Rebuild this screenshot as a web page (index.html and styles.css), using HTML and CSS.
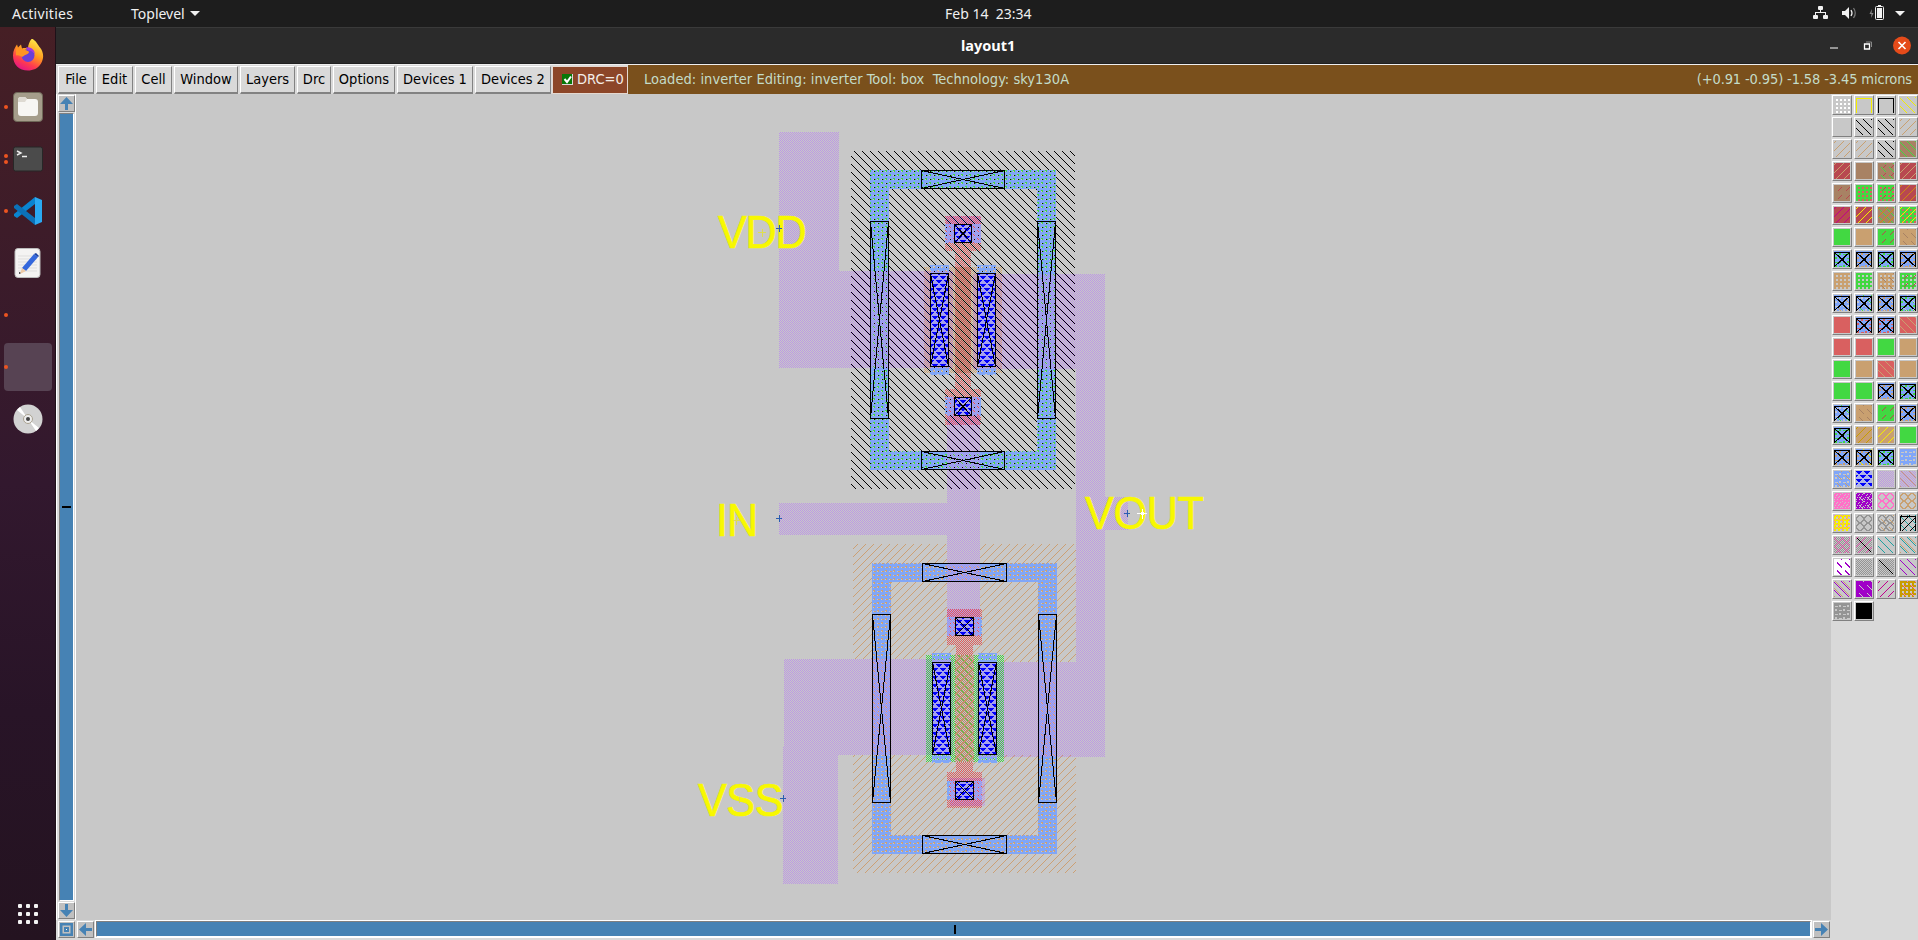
FILE: index.html
```
<!DOCTYPE html>
<html lang="en">
<head>
<meta charset="utf-8">
<title>layout1</title>
<link rel="stylesheet" href="styles.css">
</head>
<body>
<header class="topbar">
  <span class="activities">Activities</span>
  <span class="appmenu">Toplevel <i class="caret"></i></span>
  <span class="clock">Feb 14&nbsp; 23:34</span>
  <svg class="tray" width="110" height="27" viewBox="1808 0 110 27">
    <g fill="#f2f2f2">
      <rect x="1818" y="6" width="5" height="4" rx="1"/><rect x="1813" y="15" width="5" height="4" rx="1"/><rect x="1823" y="15" width="5" height="4" rx="1"/>
      <path d="M1820 10h1v2h5v3h-1v-2h-9v2h-1v-3h5z"/>
      <path d="M1842 11h3l4-4v12l-4-4h-3z"/>
      <path d="M1895 11h10l-5 5z"/>
      <rect x="1877" y="8" width="5" height="10"/><rect x="1878" y="5" width="3" height="1.500"/>
    </g>
    <rect x="1875.500" y="6.500" width="8" height="13" rx="1" fill="none" stroke="#f2f2f2"/>
    <path d="M1851 10q2 3 0 6" fill="none" stroke="#eee" stroke-width="1.300"/>
    <path d="M1853.500 8q3.500 5 0 10" fill="none" stroke="#777" stroke-width="1.300"/>
    <path d="M1872 9l-2.500 5h2l-.5 4 2.500-5h-2z" fill="#8a8a8a"/>
  </svg>
</header>
<div class="desktop">
  <nav class="dock">
    <div class="slot"><svg width="32" height="32" viewBox="0 0.500 32 32">
      <defs><linearGradient id="fox" x1=".8" y1="0" x2=".3" y2="1"><stop offset="0" stop-color="#fff44f"/><stop offset=".45" stop-color="#ff9a1f"/><stop offset=".75" stop-color="#ff3b4f"/><stop offset="1" stop-color="#e31587"/></linearGradient></defs>
      <path d="M20 0c5 3 6 7 8 9 4 5 4 11 1 16-3 5-8 7-13 7C7 32 1 26 1 17c0-5 2-8 4-11l1 3 3-3 1 4c3-1 5 0 6 0 0-4 2-8 4-10z" fill="url(#fox)"/>
      <circle cx="16" cy="17" r="6.500" fill="#6a3fd8"/><path d="M14 9c6-1 9 3 9 8 0-3-4-5-7-5z" fill="#a238e0"/>
      <path d="M4 10c3-1 5 0 7 1 3 1 6 1 6 3-1 2-4 2-6 4-2 1-3-2-7-1z" fill="#ff9422"/></svg></div>
    <div class="slot"><i class="dot"></i><svg width="30" height="30" viewBox="0 0 30 30"><rect x=".5" y=".5" width="29" height="29" rx="3.500" fill="#a59d8b" stroke="#6f6858"/><path d="M5 8q0-3 3-3h4l2 2h8q3 0 3 3v11q0 3-3 3H8q-3 0-3-3z" fill="#f7f6f3"/><path d="M5 10V8q0-3 3-3h4l2 2-2 3z" fill="#dedad2"/></svg></div>
    <div class="slot"><i class="dot up"></i><i class="dot down"></i><svg width="30" height="26" viewBox="0 0 30 26"><rect x=".5" y="1" width="29" height="24" rx="2" fill="#4b4b4b" stroke="#272727"/><path d="M4 5l4 2-4 2M9 10.500h5" fill="none" stroke="#eee" stroke-width="1.400"/></svg></div>
    <div class="slot"><i class="dot"></i><svg width="30" height="30" viewBox="0 0 30 30"><path d="M22 1l7 3v22l-7 3z" fill="#2aa9f2"/><path d="M22 1v7L4 22l-3-2v-2z" fill="#0a84d0"/><path d="M22 29v-7L4 8l-3 2v2z" fill="#0b71b8"/></svg></div>
    <div class="slot"><svg width="27" height="30" viewBox="0 0 27 30"><rect x="1" y=".5" width="25" height="29" rx="3" fill="#f4f3f2" stroke="#bbb"/><path d="M4 8h19M4 11h19M4 14h19M4 17h19M4 20h19M4 23h19" stroke="#d5d5d5" stroke-width=".7"/><path d="M8 20L20 6l4 3-12 14z" fill="#3568dc"/><path d="M20 6l2-1 3 3-1 1z" fill="#173e9e"/><path d="M8 20l4 3-6 3z" fill="#edc9a5"/><path d="M5 24l2 1-2 1z" fill="#222"/></svg></div>
    <div class="slot"><i class="dot"></i></div>
    <div class="slot active"><i class="dot"></i></div>
    <div class="slot"><svg width="30" height="30" viewBox="0 0 30 30"><circle cx="15" cy="15" r="14.500" fill="#d2d2d2"/><path d="M15 15L4 6a14 14 0 0 1 3-3zM15 15l11 9a14 14 0 0 1-3 3z" fill="#fff"/><circle cx="15" cy="15" r="4.500" fill="#eee" stroke="#aaa291"/><circle cx="15" cy="15" r="2" fill="#444"/></svg></div>
    <div class="apps"><i></i><i></i><i></i><i></i><i></i><i></i><i></i><i></i><i></i></div>
  </nav>
  <main class="window">
    <div class="titlebar"><span class="title">layout1</span>
      <svg class="controls" width="100" height="36" viewBox="1818 27.500 100 36"><path d="M1830 47.500h8" stroke="#fff"/><path d="M1864.500 43.500h5v5h-5z" stroke="#fff" stroke-width="1.300" fill="none"/><path d="M1866 41.500h5.500v5" stroke="#888" fill="none"/><circle cx="1902" cy="45" r="9" fill="#e54b1a"/><path d="M1898.500 41.500l7 7m0-7l-7 7" stroke="#fff" stroke-width="1.600"/></svg>
    </div>
    <div class="menubar">
      <span class="btn w38">File</span><span class="btn w39">Edit</span><span class="btn w39">Cell</span><span class="btn w66">Window</span><span class="btn w57">Layers</span><span class="btn w36">Drc</span><span class="btn w64">Options</span><span class="btn w78">Devices 1</span><span class="btn w78">Devices 2</span>
      <span class="drc"><svg width="11" height="11" viewBox="0 0 11 11"><path d="M0 0h11v11H0z" fill="#d9d9d9"/><path d="M0 0h10v10H0z" fill="#087808"/><path d="M2.500 5l2.500 3 4-5.500" fill="none" stroke="#fff" stroke-width="2"/></svg><span>DRC=0</span></span>
      <div class="status"><span class="msg">Loaded: inverter Editing: inverter Tool: box&nbsp; Technology: sky130A</span><span class="pos">(+0.91 -0.95) -1.58 -3.45 microns</span></div>
    </div>
    <div class="work">
      <div class="vscroll">
        <svg class="sbtn" viewBox="0 0 15 15"><path d="M7.500 1L14 8H9v6H6V8H1z"/></svg>
        <div class="trough"><i class="htick"></i></div>
        <svg class="sbtn" viewBox="0 0 15 15"><path d="M7.500 14L14 7H9V1H6v6H1z"/></svg>
      </div>
      <svg class="layout" width="1755" height="826" viewBox="76 94 1755 826" shape-rendering="crispEdges">
        <defs id="stipples"></defs>
        <g id="cells"></g>
        <g class="labels">
          <text transform="translate(718 248) scale(.94 1)" textLength="94.500">VDD</text>
          <text transform="translate(716 536) scale(.94 1)" textLength="45">IN</text>
          <text transform="translate(1085 529) scale(.94 1)" textLength="126.500">VOUT</text>
          <text transform="translate(698 815.500) scale(.94 1)" textLength="91">VSS</text>
        </g>
        <g fill="none" stroke="#2a5db0"><path d="M776 228.500h6M779.500 225v7M776 518.500h6M779.500 515v7M1124 513.500h6M1127.500 510v7M780 798.500h6M783.500 795v7"/></g>
        <path d="M758 232.500h8M762.500 229v8M733 520.500h7M736.500 517v8M739.500 797v6" stroke="#dede50"/>
        <path d="M1137 513.500h10M1142.500 509v10" stroke="#fff"/><rect x="1141" y="512" width="3" height="3" fill="#fff"/>
      </svg>
      <aside class="palette" id="palette"></aside>
    </div>
    <div class="hscroll">
      <svg class="sbtn" viewBox="0 0 15 15"><path d="M1 1h13v13H1zM3.500 3.500v8h8v-8z" fill-rule="evenodd"/><path d="M5 5h5v5H5z"/><path d="M7 7h1v1H7z" fill="#fff"/></svg>
      <svg class="sbtn" viewBox="0 0 15 15"><path d="M1 7.500L8 1v5h6v3H8v5z"/></svg>
      <div class="trough"><i class="vtick"></i></div>
      <svg class="sbtn" viewBox="0 0 15 15"><path d="M14 7.500L7 1v5H1v3h6v5z"/></svg>
      <div class="filler"></div>
    </div>
  </main>
</div>
<script src="layout.js"></script>
</body>
</html>
```
FILE: layout.js
```
var defs = '';
// Each stipple is a repeating pixel mask in one colour.
function stipple(id, color, size, on) {
  var d = '';
  for (var y = 0; y < size; y++)
    for (var x = 0; x < size; x++)
      if (on(x, y)) d += 'M' + x + ' ' + y + 'h1v1h-1z';
  defs += '<pattern id="' + id + '" width="' + size + '" height="' + size +
    '" patternUnits="userSpaceOnUse"><path d="' + d + '" fill="' + color + '"/></pattern>';
}
var checker = function (x, y) { return (x + y) % 2 === 0; };
var odd = function (x, y) { return (x + y) % 2 === 1; };
var down = function (x, y) { return (x - y + 8) % 8 === 7; };
var down2 = function (x, y) { return (x - y + 8) % 8 === 1; };
var up = function (x, y) { return (x + y) % 8 === 1; };
// Solid two-pixel bands parted by rows of short dashes.
var bricks = function (x, y) {
  var s = (x + (y > 3 ? 4 : 0)) % 8, r = y % 4;
  return r === 3 ? s === 0 || s === 4 || s === 7 : r === 2 ? !(s === 5 || s === 6) : true;
};
var tri = function (x, y) {
  var s = (x + (y > 3 ? 4 : 0)) % 8, r = y % 4;
  return r === 0 ? s < 6 : r === 1 ? s > 0 && s < 5 : r === 2 ? s > 1 && s < 4 : false;
};
var ring = function (x, y) { return Math.abs(Math.hypot(x - 3.5, y - 3.5) - 3.3) < 0.75; };
var dots = function (x, y) { return x % 4 > 1 && y % 4 > 1; };
var rare = function (x, y) { return (x * 5 + y * 3) % 16 < 3; };
stipple('metal', '#bd98e4', 2, checker);
stipple('poly', '#df5c5c', 2, odd);
stipple('polyd', '#bf5050', 2, odd);
stipple('gate', '#b98465', 2, checker);
stipple('pd', '#cca474', 2, odd);
stipple('nd', '#42d842', 2, odd);
stipple('grdots', '#42d842', 4, function (x, y) { return !(x < 2 && y === 3); });
stipple('tandots', '#cca074', 4, function (x, y) { return !(x < 2 && y === 3); });
stipple('well', '#000', 8, down);
stipple('sub', '#cca074', 8, up);
stipple('li', '#80a6f8', 8, bricks);
stipple('tri', '#0000fa', 8, tri);
stipple('gdown', '#42d842', 8, down);
stipple('gup', '#cca074', 8, up);
var colors = { k: '#000', t: '#c9a070', y: '#f4ee00', g: '#42d842', r: '#b84850', n: '#a88264', o: '#d08a10',
  m: '#c0008c', a: '#20a0a0', p: '#a000c8', w: '#fff', c: '#949494', s: '#d96060', i: '#ff70c8', v: '#bd98e4', x: '#c8c8c8', e: '#c89c00' };
var shapes = { d: down, u: up, E: down2, D: function (x, y) { return down(x, y) && x % 8 > 2; },
  U: function (x, y) { return up(x, y) && x % 8 > 3; },
  W: function (x, y) { return (down(x, y) || down2((x + 1) % 8, y)) && x % 8 > 2; },
  o: dots, c: checker, r: ring, b: bricks, q: rare };
for (var c in colors) for (var s in shapes) stipple('s' + c + s, colors[c], 8, shapes[s]);

function box(x1, y1, x2, y2, fill) {
  return '<rect x="' + x1 + '" y="' + y1 + '" width="' + (x2 - x1) + '" height="' + (y2 - y1) + '" fill="' + fill + '"/>';
}
function st(id, list) {
  return list.map(function (b) { return box(b[0], b[1], b[2], b[3], 'url(#' + id + ')'); }).join('');
}
function cross(list) {
  return list.map(function (b) {
    var x1 = b[0] + .5, y1 = b[1] + .5, x2 = b[2] - .5, y2 = b[3] - .5;
    return '<path fill="none" stroke="#000" d="M' + x1 + ' ' + y1 + 'H' + x2 + 'V' + y2 + 'H' + x1 + 'ZL' + x2 + ' ' + y2 + 'M' + x2 + ' ' + y1 + 'L' + x1 + ' ' + y2 + '"/>';
  }).join('');
}
var nring = [[870, 170, 1056, 189], [870, 451, 1056, 470], [870, 189, 889, 451], [1037, 189, 1056, 451]];
var pring = [[872, 563, 1057, 582], [872, 835, 1057, 854], [872, 582, 891, 835], [1038, 582, 1057, 835]];
var contacts = [[954, 224, 972, 243], [954, 397, 972, 416], [955, 617, 974, 636], [955, 781, 974, 800],
  [930, 273, 949, 367], [977, 273, 996, 367], [932, 662, 951, 755], [978, 662, 997, 755]];
var art = '';
art += st('grdots', nring) + st('tandots', pring);
art += st('pd', [[924, 267, 955, 373], [971, 267, 1002, 373]]);
art += st('sub', [[853, 544, 947, 659], [947, 645, 980, 655], [980, 544, 1076, 662], [853, 755, 1076, 873]]);
art += st('nd', [[926, 655, 955, 762], [974, 655, 1004, 762]]);
art += st('poly', [[945, 216, 981, 251], [955, 251, 971, 267], [955, 373, 971, 389], [945, 389, 981, 425],
  [947, 609, 982, 645], [956, 645, 973, 655], [956, 762, 973, 772], [947, 772, 982, 808]]);
art += box(955, 267, 971, 373, '#c8a890') + st('polyd', [[955, 267, 971, 373]]);
art += st('gdown', [[955, 655, 974, 762]]) + st('gup', [[955, 655, 974, 762]]) + st('gate', [[955, 655, 974, 762]]);
art += st('well', [[851, 151, 1075, 489]]);
art += st('li', nring.concat(pring, [[945, 224, 981, 243], [945, 397, 981, 416], [947, 617, 982, 636], [947, 781, 982, 800],
  [930, 265, 949, 375], [977, 265, 996, 375], [932, 653, 951, 763], [978, 653, 997, 763]]));
art += st('metal', [[779, 132, 839, 271], [779, 271, 953, 368], [973, 274, 1105, 369], [1076, 369, 1105, 662],
  [1105, 497, 1128, 530], [779, 503, 947, 535], [947, 397, 980, 636], [946, 216, 981, 243], [784, 659, 953, 755],
  [783, 755, 838, 884], [783, 747, 784, 755], [976, 662, 1105, 757], [950, 778, 985, 806]]);
art += contacts.map(function (b) { return box(b[0], b[1], b[2], b[3], '#a5a0ee'); }).join('') + st('tri', contacts);
art += cross(contacts.concat([[921, 170, 1005, 189], [921, 451, 1005, 470], [870, 221, 889, 419], [1037, 221, 1056, 419],
  [922, 563, 1007, 582], [922, 835, 1007, 854], [872, 614, 891, 803], [1038, 614, 1057, 803]]));
document.getElementById('stipples').innerHTML = defs;
document.getElementById('cells').innerHTML = art;

// Palette rows: "K" + colour is a contact, "F" + colour a frame, "B" + colour a base fill,
// "/" + colour a single diagonal, "L" local interconnect, "T" contact metal, other pairs are stipples.
var rows = ['wo|Fy|Fk|yd', '|kd|kd|tu', 'tu|tu|kd|Bn gd', 'Br tu|Bn|Bn rU gD|Br tu', 'Bn rU|Bg so|Bg so rU|Br ou',
  'Br mu|Br yu|Bn gd gu ou|Bg so yu', 'Bg|Bt|Bg rU|Bt nD', 'Kg|Kt|Kg|Kt', 'Bt xo|Bg xo|Bt xo nD|Bg xo rU',
  'Kx tD|Kx gD|Kt xD|Kg xD', 'Bs|Ks|Ks|Bs td', 'Bs|Bs|Bg|Bt', 'Bg|Bt|Bs td|Bt', 'Bg|Bg|Kt|Kg', 'Kx gD|Bt nD|Bg rU|Kt',
  'Kg|Bt eu|Bt yu|Bg', 'Kt|Kt yD|Kg|L', 'L tD|T|vc|vc tE', 'Bi xq|Bp xq xD|ir|ir tr', 'By iq xo|cr|cr tD|Fk au ad ku',
  'cc iu id|cc iu /k|ad|ad tE', 'Bw pW|cc|cc /k|pd', 'tE pd|Bp mD xD|mu|Be iD xo', 'cb|Bk'];
var cells = '';
rows.forEach(function (row) {
  row.split('|').forEach(function (spec) {
    var g = '', top = '';
    spec.split(' ').forEach(function (t) {
      if (!t) return;
      var col = colors[t[1]];
      if (t[0] === 'B') g += box(0, 0, 16, 16, col);
      else if (t === 'L') g += box(0, 0, 16, 16, 'url(#li)');
      else if (t === 'T') g += box(0, 0, 16, 16, '#b0b4e8') + box(0, 0, 16, 16, 'url(#tri)');
      else if (t[0] === 'K') {
        g += box(0, 0, 16, 16, col) + box(0, 0, 16, 16, 'url(#li)');
        top = '<path class="frame" d="M.5 15.500V1.500h15v14M1 2l14 13M15 2L1 15"/><path d="M7 8h3v2H7z"/>';
      }
      else if (t[0] === 'F') g += '<path class="frame" style="stroke:' + col + '" d="M.5 16V1.500h15V16"/>';
      else if (t[0] === '/') g += '<path class="frame" d="M1 1l14 14"/>';
      else g += box(0, 0, 16, 16, 'url(#s' + t + ')');
    });
    cells += '<svg class="swatch" viewBox="0 0 16 16" shape-rendering="crispEdges">' + g + top + '</svg>';
  });
});
document.getElementById('palette').innerHTML = cells;
```
FILE: styles.css
```
* { box-sizing: border-box; }
body { margin: 0; width: 1918px; height: 940px; overflow: hidden; display: flex; flex-direction: column; background: #1d1d1d; font-family: "Noto Sans", sans-serif; }
svg { display: block; flex: none; }
.topbar { position: relative; height: 27px; flex: none; display: flex; align-items: center; background: #1d1d1d; color: #f0f0f0; font-size: 14px; }
.activities { width: 131px; padding-left: 12px; letter-spacing: .3px; }
.appmenu { width: 814px; display: flex; align-items: center; gap: 5px; }
.caret { border: 5px solid transparent; border-top-color: #f0f0f0; border-bottom: 0; }
.clock { flex: 1; white-space: nowrap; }
.desktop { flex: 1; display: flex; min-height: 0; }
.dock { width: 56px; padding-top: 2px; display: flex; flex-direction: column; background: linear-gradient(#461f25, #32182e 50%, #281427 75%, #241320); border-right: 1px solid #1e1119; }
.slot { position: relative; height: 52px; display: flex; align-items: center; justify-content: center; }
.active::before { content: ""; position: absolute; left: 4px; top: 2px; width: 48px; height: 48px; border-radius: 4px; background: #574353; }
.dot { position: absolute; left: 4px; top: 24px; width: 4px; height: 4px; border-radius: 50%; background: #ed5421; }
.dot.up { top: 21px; }
.dot.down { top: 27px; }
.apps { margin: auto 0 16px 18px; display: grid; grid-template-columns: repeat(3, 4px); gap: 4px; }
.apps i { width: 4px; height: 4px; border-radius: 1px; background: #f3f3f3; }
.window { flex: 1; display: flex; flex-direction: column; min-width: 0; background: #d9d9d9; }
.titlebar { height: 37px; flex: none; display: flex; align-items: center; background: #2b2b2b; border-top: 1px solid #3a3a3a; border-bottom: 1px solid #202020; color: #fff; font-size: 14.5px; font-weight: 700; }
.title { padding: 0 0 2px 905px; flex: 1; }
.menubar { height: 30px; flex: none; display: flex; border-top: 1px solid #eee; padding-left: 1px; font-family: "DejaVu Sans Condensed", "DejaVu Sans", sans-serif; font-stretch: condensed; font-size: 14.5px; color: #000; }
.btn { margin: 1px 1px 0 1px; height: 28px; line-height: 25px; text-align: center; white-space: nowrap; background: #d9d9d9; border: 1px solid #fff; border-right: 1px solid #828282; border-bottom: 2px solid #828282; }
.w36 { width: 34px; } .w38 { width: 36px; } .w39 { width: 37px; } .w57 { width: 55px; } .w64 { width: 62px; } .w66 { width: 64px; } .w78 { width: 76px; }
.drc { width: 76px; margin-top: 1px; height: 28px; border: 1px solid #e4d8d0; background: #8c4628; color: #f4eee8; display: flex; align-items: center; gap: 4px; padding: 0 0 2px 9px; }
.status { flex: 1; display: flex; justify-content: space-between; line-height: 28px; padding: 0 6px 0 16px; background: #7a501c; color: #c4dcc8; white-space: pre; }
.msg { letter-spacing: .04px; }
.pos { letter-spacing: -.13px; }
.work { flex: 1; display: flex; min-height: 0; }
.vscroll { width: 20px; padding: 1px 1px 1px 2px; display: flex; flex-direction: column; align-items: center; gap: 1px; border-right: 1px solid #fff; border-left: 1px solid #fff; }
.sbtn { width: 17px; height: 17px; flex: none; background: #c0c0c0; border: 1px solid #fff; border-right-color: #808080; border-bottom-color: #808080; fill: #4682b4; }
.trough { position: relative; flex: 1; background: #4682b4; border: 1px solid #fff; border-top-color: #808080; border-left: 1px solid #808080; }
.vscroll .trough { width: 15px; }
.hscroll { height: 20px; flex: none; display: flex; align-items: flex-start; padding: 1px 0 0 2px; gap: 2px; }
.hscroll .trough { height: 16px; outline: 1px solid #fff; }
.htick { position: absolute; left: 2px; top: 392px; width: 9px; height: 2px; background: #000; }
.vtick { position: absolute; left: 857px; top: 3px; width: 2px; height: 9px; background: #000; }
.filler { width: 86px; }
.layout { background: #c8c8c8; }
.labels { fill: #f8f800; stroke: #f8f800; stroke-width: .7px; font-family: "Liberation Sans", Arial, sans-serif; font-size: 46px; }
.palette { flex: 1; padding: 1px 0 0 1px; display: grid; grid-template-columns: repeat(4, 20px); grid-auto-rows: 20px; gap: 2px; align-content: start; }
.swatch { width: 20px; height: 20px; padding: 1px; background: #c8c8c8; border: 1px solid #fff; border-right-color: #808080; border-bottom-color: #808080; }
.frame { fill: none; stroke: #000; stroke-width: 1.200; }
```
